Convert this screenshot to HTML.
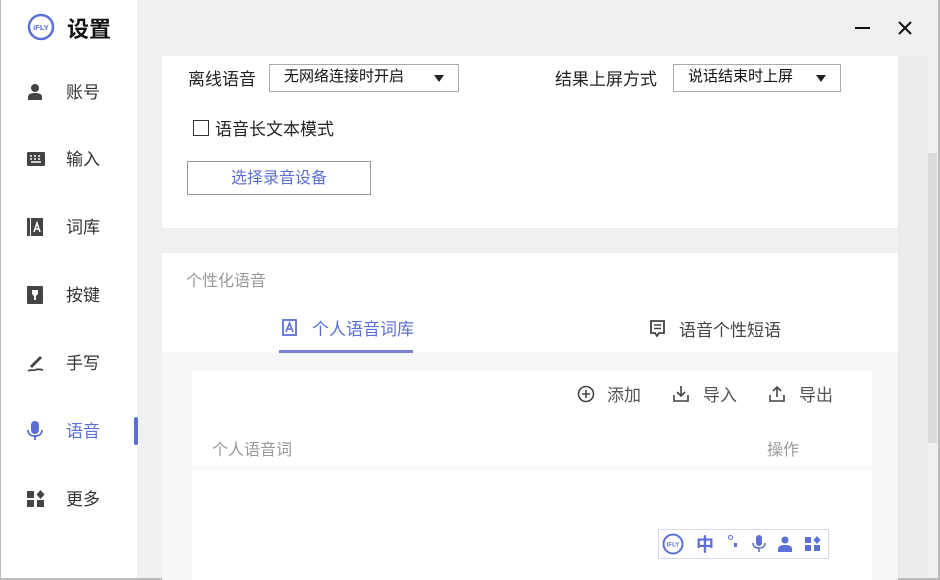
<!DOCTYPE html>
<html><head><meta charset="utf-8"><style>
*{margin:0;padding:0;box-sizing:border-box}
body{width:940px;height:580px;overflow:hidden;background:#f0f0f0;font-family:"Liberation Sans","Noto Sans CJK SC",sans-serif;position:relative;color:#222}
.a{position:absolute}
#side{left:0;top:0;width:137px;height:580px;background:#fff;border-left:1px solid #bbb}
.nav{position:absolute;left:26px;font-size:17px;color:#333;height:0}
.nav svg{position:absolute;left:0;transform:translateY(-50%);top:0}
.nav .t{position:absolute;left:39px;white-space:nowrap;top:-14px}
.card{background:#fff}
.sel{border:1px solid #aaa;background:#fff;font-size:15px;height:28px;line-height:24px;padding-left:14px;color:#111}
.sel:after{content:"";position:absolute;right:14px;top:10px;border-left:5px solid transparent;border-right:5px solid transparent;border-top:7px solid #222}
</style></head><body>
<div id="side" class="a">
 <svg class="a" style="left:26px;top:13px" width="28" height="28" viewBox="0 0 28 28"><circle cx="14" cy="14" r="12" fill="none" stroke="#5b6fd6" stroke-width="2.5"/><text x="14" y="17" font-size="7.5" font-weight="bold" fill="#5b6fd6" text-anchor="middle" font-family="Liberation Sans">iFLY</text></svg>
 <div class="a" style="left:66px;top:12px;font-size:22px;font-weight:bold;color:#111">设置</div>
 <div class="nav" style="top:92px"><svg width="16" height="18" viewBox="0 0 16 18"><circle cx="8" cy="5" r="4" fill="#444"/><path d="M1 17v-3c0-3 3-4 7-4s7 1 7 4v3z" fill="#444"/></svg><span class="t">账号</span></div>
 <div class="nav" style="top:159px"><svg width="18" height="14" viewBox="0 0 18 14"><rect x="0" y="0" width="18" height="14" rx="1" fill="#444"/><path d="M3 4h2M7 4h2M11 4h2M3 7h2M7 7h2M11 7h2M4 10h10" stroke="#fff" stroke-width="1.5"/></svg><span class="t">输入</span></div>
 <div class="nav" style="top:227px"><svg width="16" height="18" viewBox="0 0 16 18"><rect x="0" y="0" width="3" height="18" fill="#444"/><rect x="4" y="0" width="12" height="18" fill="#444"/><path d="M7 14l3-9 3 9M8 11h4" stroke="#fff" stroke-width="1.5" fill="none"/></svg><span class="t">词库</span></div>
 <div class="nav" style="top:295px"><svg width="16" height="18" viewBox="0 0 16 18"><rect x="0" y="0" width="16" height="18" rx="1" fill="#444"/><path d="M5 4h6v4l-3 3-3-3z" fill="#fff"/><rect x="7" y="10" width="2" height="4" fill="#fff"/></svg><span class="t">按键</span></div>
 <div class="nav" style="top:363px"><svg width="18" height="18" viewBox="0 0 18 18"><path d="M3 12L13 2l2 2L5 14z" fill="#444"/><path d="M1 17c3-2 5 0 7-1s4-1 8 0" stroke="#444" stroke-width="1.8" fill="none"/></svg><span class="t">手写</span></div>
 <div class="nav" style="top:431px;color:#5b6fd6"><svg width="16" height="20" viewBox="0 0 16 20"><rect x="4" y="0" width="8" height="13" rx="4" fill="#5b6fd6"/><path d="M1 9c0 4 3 6 7 6s7-2 7-6M8 15v4" stroke="#5b6fd6" stroke-width="1.8" fill="none"/></svg><span class="t">语音</span></div>
 <div class="a" style="left:133px;top:417px;width:4px;height:28px;background:#5b6fd6;border-radius:2px"></div>
 <div class="nav" style="top:499px"><svg width="18" height="18" viewBox="0 0 18 18"><rect x="0" y="1" width="7" height="7" fill="#444"/><rect x="0" y="10" width="7" height="7" fill="#444"/><rect x="10" y="10" width="7" height="7" fill="#444"/><path d="M13.5 0l4 4.5-4 4.5-4-4.5z" fill="#444"/></svg><span class="t">更多</span></div>
</div>
<div class="a" style="left:855px;top:27px;width:15px;height:2px;background:#111"></div>
<svg class="a" style="left:897px;top:20px" width="16" height="16" viewBox="0 0 16 16"><path d="M2 2L14 14M14 2L2 14" stroke="#111" stroke-width="2"/></svg>
<div class="a" style="left:898px;top:56px;width:30px;height:524px;background:#ececec"></div>
<div class="a" style="left:928px;top:153px;width:9px;height:290px;background:#dcdcdc"></div>
<div class="a" style="left:938px;top:0;width:2px;height:580px;background:#bbb"></div>
<div class="a" style="left:0;top:578px;width:940px;height:2px;background:#bbb"></div>

<div class="a card" style="left:162px;top:56px;width:736px;height:172px">
 <div class="a" style="left:26px;top:9px;font-size:17px">离线语音</div>
 <div class="a sel" style="left:107px;top:8px;width:190px">无网络连接时开启</div>
 <div class="a" style="left:393px;top:9px;font-size:17px">结果上屏方式</div>
 <div class="a sel" style="left:511px;top:8px;width:168px">说话结束时上屏</div>
 <div class="a" style="left:31px;top:64px;width:16px;height:16px;border:1.5px solid #333"></div>
 <div class="a" style="left:53px;top:59px;font-size:17px">语音长文本模式</div>
 <div class="a" style="left:25px;top:105px;width:184px;height:34px;border:1px solid #999;text-align:center;line-height:34px;font-size:16px;color:#5b6fd6">选择录音设备</div>
</div>

<div class="a card" style="left:162px;top:253px;width:736px;height:327px;background:#f7f7f7">
 <div class="a" style="left:0;top:0;width:736px;height:99px;background:#fff"></div>
 <div class="a" style="left:24px;top:14px;font-size:16px;color:#999">个性化语音</div>
 <svg class="a" style="left:120px;top:66px" width="15" height="17" viewBox="0 0 15 17"><rect x="1" y="1" width="13" height="15" fill="none" stroke="#5b6fd6" stroke-width="1.8"/><path d="M4 13l3.5-9 3.5 9M5.3 10h4.4" stroke="#5b6fd6" stroke-width="1.6" fill="none"/></svg>
 <div class="a" style="left:150px;top:62px;font-size:17px;color:#5b6fd6">个人语音词库</div>
 <div class="a" style="left:117px;top:97px;width:134px;height:3px;background:#7b7fd6"></div>
 <svg class="a" style="left:488px;top:67px" width="15" height="18" viewBox="0 0 15 18"><path d="M1 1h13v12H9l-2 3-2-3H1z" fill="none" stroke="#444" stroke-width="1.8"/><path d="M4 5h7M4 8.5h7" stroke="#444" stroke-width="1.6"/></svg>
 <div class="a" style="left:517px;top:63px;font-size:17px;color:#444">语音个性短语</div>
 <div class="a" style="left:30px;top:118px;width:680px;height:209px;background:#fff"></div>
 <div class="a" style="left:30px;top:213px;width:680px;height:4px;background:#f7f7f7"></div>
 <svg class="a" style="left:415px;top:132px" width="18" height="18" viewBox="0 0 18 18"><circle cx="9" cy="9" r="7.5" fill="none" stroke="#444" stroke-width="1.6"/><path d="M9 5v8M5 9h8" stroke="#444" stroke-width="1.6"/></svg>
 <div class="a" style="left:445px;top:128px;font-size:17px;color:#555">添加</div>
 <svg class="a" style="left:510px;top:132px" width="18" height="18" viewBox="0 0 18 18"><path d="M9 1v10M5 7l4 4 4-4M2 10v6h14v-6" stroke="#444" stroke-width="1.6" fill="none"/></svg>
 <div class="a" style="left:541px;top:128px;font-size:17px;color:#555">导入</div>
 <svg class="a" style="left:606px;top:132px" width="18" height="18" viewBox="0 0 18 18"><path d="M9 12V2M5 6l4-4 4 4M2 10v6h14v-6" stroke="#444" stroke-width="1.6" fill="none"/></svg>
 <div class="a" style="left:637px;top:128px;font-size:17px;color:#555">导出</div>
 <div class="a" style="left:50px;top:183px;font-size:16px;color:#999">个人语音词</div>
 <div class="a" style="left:605px;top:183px;font-size:16px;color:#999">操作</div>
 <div class="a" style="left:496px;top:276px;width:171px;height:30px;border:1px solid #d8d8e8;background:#fff"></div>
 <svg class="a" style="left:500px;top:280px" width="22" height="22" viewBox="0 0 22 22"><circle cx="11" cy="11" r="9.5" fill="none" stroke="#5b6fd6" stroke-width="2"/><text x="11" y="13.5" font-size="6" font-weight="bold" fill="#5b6fd6" text-anchor="middle">iFLY</text></svg>
 <div class="a" style="left:534px;top:278px;font-size:18px;color:#5b6fd6;font-weight:bold">中</div>
 <div class="a" style="left:566px;top:282px;width:5px;height:5px;border:1.5px solid #5b6fd6;border-radius:50%"></div>
 <div class="a" style="left:572px;top:290px;width:3px;height:4px;background:#5b6fd6"></div>
 <svg class="a" style="left:590px;top:282px" width="14" height="18" viewBox="0 0 14 18"><rect x="4" y="0" width="6" height="11" rx="3" fill="#5b6fd6"/><path d="M1 8c0 3 2 5 6 5s6-2 6-5M7 13v4" stroke="#5b6fd6" stroke-width="1.6" fill="none"/></svg>
 <svg class="a" style="left:616px;top:283px" width="14" height="16" viewBox="0 0 14 16"><circle cx="7" cy="4" r="3.5" fill="#5b6fd6"/><path d="M0 16v-3c0-3 3-4 7-4s7 1 7 4v3z" fill="#5b6fd6"/></svg>
 <svg class="a" style="left:643px;top:283px" width="16" height="16" viewBox="0 0 16 16"><rect x="0" y="1" width="6" height="6" fill="#5b6fd6"/><rect x="0" y="9" width="6" height="6" fill="#5b6fd6"/><rect x="9" y="9" width="6" height="6" fill="#5b6fd6"/><path d="M12 0l3.5 4-3.5 4-3.5-4z" fill="#5b6fd6"/></svg>
</div>
</body></html>
